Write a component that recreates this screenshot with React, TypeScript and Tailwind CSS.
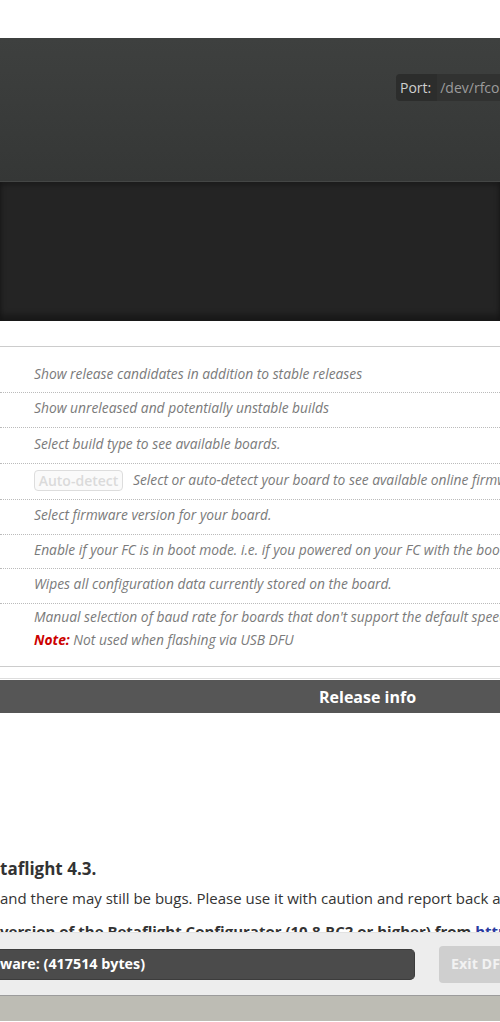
import React from "react";

const rows: { h: string; text: string; button?: boolean }[] = [
  { h: "h-[34px]", text: "Show release candidates in addition to stable releases" },
  { h: "h-[35px]", text: "Show unreleased and potentially unstable builds" },
  { h: "h-[36px]", text: "Select build type to see available boards." },
  {
    h: "h-[36px]",
    text: "Select or auto-detect your board to see available online firmware releases",
    button: true,
  },
  { h: "h-[35px]", text: "Select firmware version for your board." },
  {
    h: "h-[34px]",
    text: "Enable if your FC is in boot mode. i.e. if you powered on your FC with the bootloader pads shorted",
  },
  { h: "h-[35px]", text: "Wipes all configuration data currently stored on the board." },
];

export default function App() {
  return (
    <div className="w-[500px] h-[1022px] overflow-hidden bg-white font-['Open_Sans','Liberation_Sans',sans-serif]">
      <div className="h-[38px]" />

      {/* header */}
      <header className="h-[144px] bg-linear-to-b from-[#3e403f] to-[#353736] border-b border-[#444645] pt-[36px] pl-[396px]">
        <div className="flex items-center h-[27px] w-[160px] rounded-[4px] bg-[#2c2d2c] whitespace-nowrap text-[14px]">
          <span className="pl-[4px] pr-[6px] text-[#cfcfcf]">Port:</span>
          <span className="h-full flex items-center pl-[3px] bg-[#313231] text-[#9c9c9c]">/dev/rfcomm0</span>
        </div>
      </header>

      <div className="h-[139px] bg-[#242424] shadow-[inset_0_4px_4px_rgba(0,0,0,0.2),inset_0_-6px_6px_rgba(0,0,0,0.35)]" />

      <div className="h-[25px]" />

      {/* options table */}
      <div className="border-t border-[#cccccc] pt-[12px] border-b">
        {rows.map((r, i) => (
          <div
            key={i}
            className={`${r.h} flex items-center pb-[3px] pl-[34px] border-b border-dotted border-[#bbbbbb] whitespace-nowrap`}
          >
            {r.button && (
              <span className="shrink-0 mr-[10px] h-[21px] w-[89px] flex items-center justify-center rounded-[4px] border border-[#dddddd] bg-[#fafafa] text-[14px] font-semibold text-[#dadada]">
                Auto-detect
              </span>
            )}
            <span className="italic text-[13.8px] text-[#7a7a7a]">{r.text}</span>
          </div>
        ))}
        <div className="h-[62px] pl-[34px] pt-[2px] italic text-[13.8px] leading-[22.5px] text-[#7a7a7a] whitespace-nowrap">
          <div>Manual selection of baud rate for boards that don't support the default speed or for flashing via bluetooth.</div>
          <div>
            <span className="font-bold text-[#cc0000]">Note:</span> Not used when flashing via USB DFU
          </div>
        </div>
      </div>

      <div className="h-[11px]" />
      <div className="border-t border-[#dddddd] pt-[1px]">
        <div className="h-[33px] bg-[#565656] flex items-center pl-[319px] text-[16px] font-bold text-white whitespace-nowrap">
          Release info
        </div>
      </div>

      <div className="h-[219px] overflow-hidden pt-[145px] whitespace-nowrap text-[#333333]">
        <div className="text-[17px] leading-[22px] font-bold">taflight 4.3.</div>
        <div className="mt-[7px] text-[15px] leading-[22px]">
          and there may still be bugs. Please use it with caution and report back any issues
        </div>
        <div className="mt-[11px] text-[15px] leading-[22px] font-bold">
          version of the Betaflight Configurator (10.8-RC2 or higher) from <span className="text-[#2a3aa0]">https://github.com</span>
        </div>
      </div>

      {/* bottom toolbar */}
      <div className="h-[63px] bg-[#ededed] border-t border-[#e2e2e2] flex items-center whitespace-nowrap">
        <div className="shrink-0 h-[31px] w-[415px] rounded-r-[5px] bg-[#4b4b4b] border border-l-0 border-[#3c3c3c] flex items-center text-[14.3px] font-bold text-white">
          ware: (417514 bytes)
        </div>
        <div className="shrink-0 ml-[24px] h-[37px] w-[80px] rounded-l-[4px] bg-[#cfcfcf] flex items-center pl-[12px] text-[14.3px] font-bold text-[#f2f2f2]">
          Exit DFU
        </div>
      </div>
      <div className="h-[26px] bg-[#bdbcb4] border-t border-[#9c9c9c]" />
    </div>
  );
}
